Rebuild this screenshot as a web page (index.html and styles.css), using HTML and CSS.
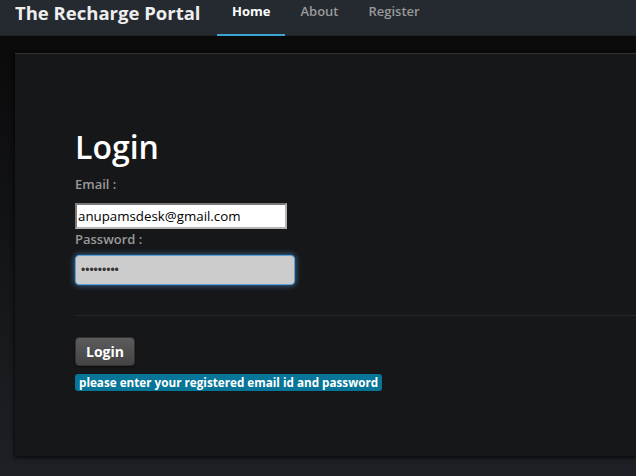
FILE: index.html
```html
<!DOCTYPE html>
<html>
<head>
<meta charset="utf-8">
<link rel="stylesheet" href="styles.css">
</head>
<body>
<nav class="navbar">
  <a class="brand">The Recharge Portal</a>
  <ul class="nav">
    <li class="active"><a>Home</a></li>
    <li><a>About</a></li>
    <li><a>Register</a></li>
  </ul>
</nav>
<main class="page">
  <section class="panel">
    <h1 class="title">Login</h1>
    <label class="field-label email-label">Email :</label>
    <input class="email" type="text" value="anupamsdesk@gmail.com">
    <label class="field-label pw-label">Password :</label>
    <input class="password" type="password" value="123456789">
    <hr class="divider">
    <button class="btn">Login</button>
    <div class="hint"><span class="badge">please enter your registered email id and password</span></div>
  </section>
</main>
</body>
</html>
```
FILE: styles.css
```css
html, body {
  margin: 0;
  padding: 0;
  height: 100%;
  overflow: hidden;
}
body {
  font-family: "Open Sans", "Noto Sans", sans-serif;
  background: linear-gradient(#0a0a0a 0px, #0b0b0c 60px, #1d2025 476px);
  color: #ddd;
}
.navbar {
  height: 36px;
  background: #252a31;
  border-bottom: 1px solid #1f2328;
  display: flex;
  align-items: stretch;
  padding-left: 15px;
  box-sizing: border-box;
}
.brand {
  font-size: 18.5px;
  font-weight: 700;
  color: #eee;
  line-height: 24px;
  padding-top: 1px;
  width: 202px;
}
.nav {
  display: flex;
  list-style: none;
  margin: 0;
  padding: 0;
}
.nav li a {
  display: block;
  padding: 0 15px;
  font-size: 13px;
  font-weight: 600;
  line-height: 23px;
  color: #999;
  height: 34px;
  box-sizing: border-box;
}
.nav li.active a {
  color: #fff;
  font-weight: 700;
  border-bottom: 2px solid #3ba4d2;
  height: 36px;
}
.page {
  padding: 17px 0 0 15px;
}
.panel {
  background: #161719;
  border-top: 1px solid #303236;
  height: 403px;
  padding: 0 0 0 60px;
  box-shadow: 0 2px 4px rgba(0,0,0,0.6), -1px 0 3px rgba(0,0,0,0.4);
  box-sizing: border-box;
  display: flex;
  flex-direction: column;
  align-items: flex-start;
}
.title {
  margin: 71px 0 0 0;
  font-size: 32px;
  font-weight: 600;
  line-height: 44px;
  color: #fff;
}
.field-label {
  font-size: 13px;
  font-weight: 600;
  color: #999;
  line-height: 18px;
}
.email-label {
  margin-top: 6px;
}
.email {
  margin-top: 10px;
  width: 212px;
  height: 26px;
  box-sizing: border-box;
  border: 2px solid;
  border-color: #7a7a7a #b5b5b5 #b5b5b5 #7a7a7a;
  background: #fff;
  font-family: "Open Sans", sans-serif;
  font-size: 13.3px;
  color: #000;
  padding: 0 1px;
  outline: none;
}
.pw-label {
  margin-top: 1px;
}
.password {
  margin-top: 7px;
  width: 220px;
  height: 30px;
  box-sizing: border-box;
  background: #cccccc;
  border: 1px solid #5aa3dc;
  border-radius: 4px;
  box-shadow: 0 0 6px rgba(82,168,236,0.7);
  padding: 0 5px;
  font-size: 12px;
  color: #333;
  outline: none;
}
.divider {
  align-self: stretch;
  margin: 30px 0 0 0;
  border: none;
  border-top: 1px solid #25272a;
  height: 0;
}
.btn {
  margin-top: 21px;
  width: 60px;
  height: 29px;
  border: 1px solid #333;
  border-radius: 4px;
  background: linear-gradient(#5c5c5c, #444);
  color: #fff;
  font-family: "Open Sans", sans-serif;
  font-weight: 700;
  font-size: 14px;
  padding: 0;
  box-shadow: 0 1px 2px rgba(0,0,0,0.5);
}
.hint {
  margin-top: 8px;
  line-height: 17px;
}
.badge {
  display: inline-block;
  background: #067598;
  color: #fff;
  font-size: 11.7px;
  font-weight: 700;
  line-height: 17px;
  padding: 0 4px;
  border-radius: 3px;
  vertical-align: top;
}
```
